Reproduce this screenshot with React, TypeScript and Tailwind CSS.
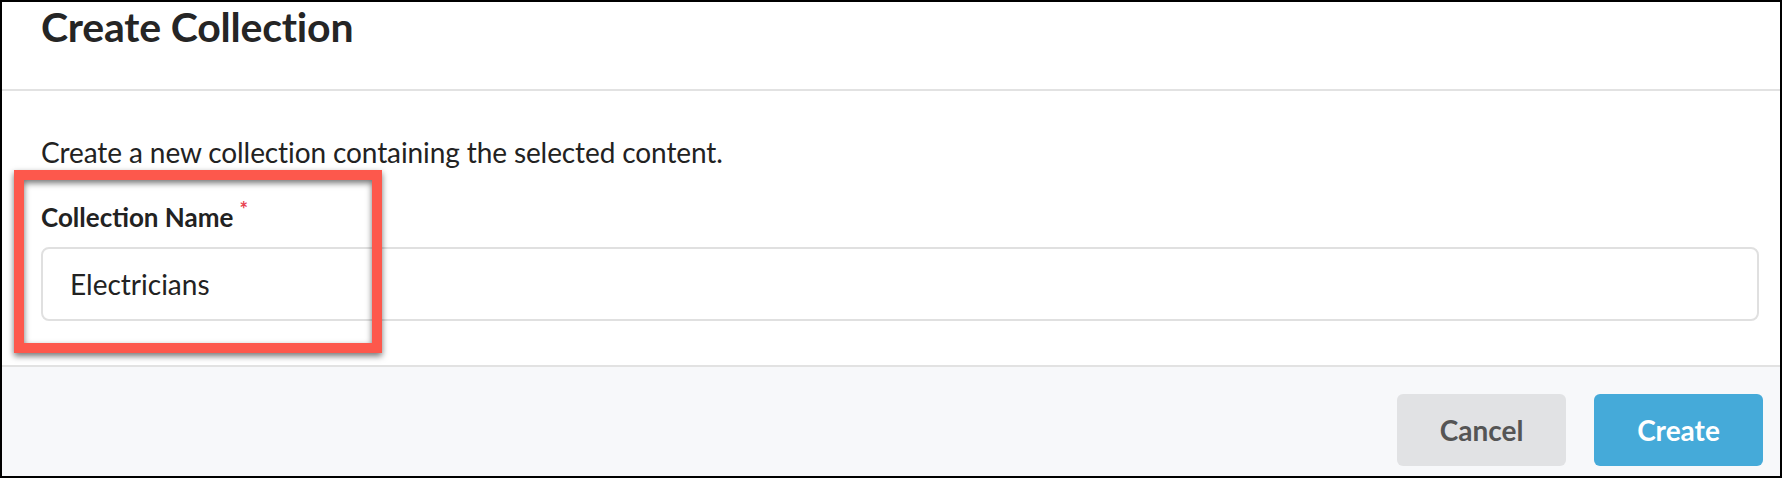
export default function App() {
  return (
    <div className="relative flex h-[478px] w-[1782px] flex-col border-2 border-black bg-white font-[Lato,sans-serif] text-[#222]">
      <div className="h-[89px] shrink-0 border-b-2 border-[#e2e2e2] pl-[39px] pt-px">
        <h2 className="text-[41px] font-bold leading-[48px] tracking-[-0.2px] text-[#252525]">Create Collection</h2>
      </div>

      <div className="shrink-0 pl-[39px] pr-[21px] pt-[44px] pb-[44px]">
        <p className="text-[28px] leading-[34px] tracking-[-0.1px]">Create a new collection containing the selected content.</p>
        <label className="mt-[33px] flex items-start text-[26px] font-bold leading-[31px] text-[#222]">
          Collection Name
          <span className="ml-[6px] mt-[-3px] text-[20px] font-bold leading-[20px] text-[#e8414f]">*</span>
        </label>
        <input
          readOnly
          value="Electricians"
          className="mt-[14px] block h-[74px] w-full rounded-[8px] border-2 border-[#e0e0e0] bg-white pl-[27px] text-[28px] text-[#222] outline-none"
        />
      </div>

      <div className="flex flex-1 justify-end gap-[28px] border-t-2 border-[#e2e2e2] bg-[#f7f8fa] pr-[17px] pt-[27px]">
        <button className="h-[72px] w-[169px] rounded-[6px] bg-[#e1e2e4] text-[28px] font-bold text-[#555]">Cancel</button>
        <button className="h-[72px] w-[169px] rounded-[6px] bg-[#45aad9] text-[28px] font-bold text-white">Create</button>
      </div>

      <div className="pointer-events-none absolute left-[12px] top-[168px] h-[183px] w-[368px] border-[10px] border-[#fd584c] drop-shadow-[0_3px_3px_rgba(0,0,0,0.55)]" />
    </div>
  );
}
